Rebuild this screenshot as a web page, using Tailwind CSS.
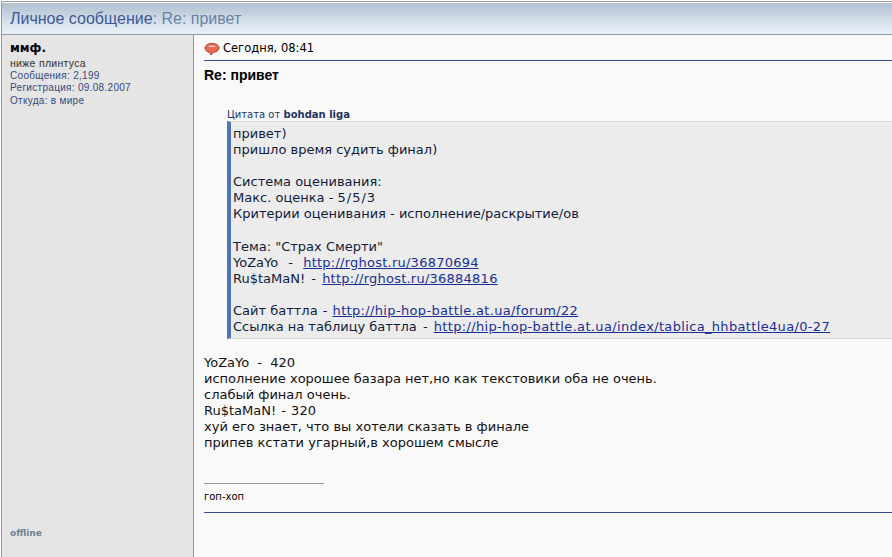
<!DOCTYPE html>
<html lang="ru">
<head>
  <meta charset="UTF-8">
  <title>Личное сообщение: Re: привет</title>
  <script src="https://cdn.jsdelivr.net/npm/@tailwindcss/browser@4"></script>
</head>
<body class="bg-white h-[557px] overflow-hidden font-['DejaVu_Sans',sans-serif] text-black">
  <div class="h-full pt-px pl-px flex flex-col">
    <div class="border-t border-l border-[#999] flex-1 flex flex-col min-h-0">
      <!-- title bar -->
      <div class="h-[32px] shrink-0 mt-px bg-linear-to-b from-[#b0c0cf] via-[#d5e0ea] via-60% to-[#e8f0f8] border-b border-[#999] pl-2 flex items-center text-[16px] font-['Liberation_Sans',sans-serif] text-[#6b82a8]">
        <span class="text-[#3e5896]">Личное сообщение</span><span>: Re: привет</span>
      </div>
      <div class="flex flex-1 min-h-0">
        <!-- sidebar -->
        <div class="w-[192px] shrink-0 bg-[#e5e5e5] border-r border-[#999] pl-2 pt-[5px] flex flex-col font-['Liberation_Sans',sans-serif] text-[10px] tracking-[0.3px] leading-3 text-[#334a80]">
          <div class="font-['DejaVu_Sans',sans-serif] tracking-normal text-[12px] leading-4 font-bold text-black">ммф.</div>
          <div class="text-[10.5px] text-[#333] mt-[1px] mb-px">ниже плинтуса</div>
          <div>Сообщения: 2,199</div>
          <div>Регистрация: 09.08.2007</div>
          <div class="mt-px">Откуда: в мире</div>
          <div class="mt-auto mb-[18px] font-['DejaVu_Sans',sans-serif] tracking-normal text-[9px] font-bold text-[#6f7f92]">offline</div>
        </div>
        <!-- message -->
        <div class="flex-1 bg-[#f9f9f9] pl-[10px] min-w-0">
          <div class="h-[26px] pt-[2px] border-b border-[#3b4a94] flex items-center gap-[3px] text-[11.5px]">
            <svg width="16" height="14" viewBox="0 0 16 14">
              <path d="M8 1.500C4 1.500 1 3.500 1 6s2.600 4.200 5 4.300l1 2.700 2.200-2.800C12.500 10 15 8.400 15 6c0-2.500-3-4.500-7-4.500z" fill="#ea6a55" stroke="#b8392c"/>
              <path d="M4 4.500c1.500-1.200 6-1.200 8 0-2 .8-6 .8-8 0z" fill="#fbd9cf"/>
            </svg>
            <span>Сегодня, 08:41</span>
          </div>
          <div class="mt-[6px] font-['Liberation_Sans',sans-serif] text-[14px] leading-4 font-bold">Re: привет</div>
          <div class="mt-[26px] pl-[23px]">
            <div class="text-[10px] leading-3 text-[#1d3560]">Цитата от <b>bohdan liga</b></div>
            <div class="border-l-4 border-y border-l-[#4f76b4] border-y-[#d9d9d9] bg-[#ececec] pl-[2px] pt-[4px] text-[13px] leading-[16.1px] text-[#111c3a] h-[218px]">
              привет)<br>
              пришло время судить финал)<br><br>
              Система оценивания:<br>
              Макс. оценка - <span class="tracking-[1px]">5/5/3</span><br>
              Критерии оценивания - исполнение/раскрытие/ов<br><br>
              Тема: "Страх Смерти"<br>
              YoZaYo <span class="px-[6px]">-</span> <a class="underline tracking-[0.24px] text-[#1a2f96]">http://rghost.ru/36870694</a><br>
              Ru$taMaN! <span class="px-[2px]">-</span> <a class="underline tracking-[0.24px] text-[#1a2f96]">http://rghost.ru/36884816</a><br><br>
              Сайт баттла <span class="px-px">-</span> <a class="underline tracking-[0.34px] text-[#1a2f96]">http://hip-hop-battle.at.ua/forum/22</a><br>
              Ссылка на таблицу баттла <span class="px-[2px]">-</span> <a class="underline tracking-[0.34px] text-[#1a2f96]">http://hip-hop-battle.at.ua/index/tablica_hhbattle4ua/0-27</a>
            </div>
          </div>
          <div class="mt-[16px] text-[13px] leading-4 text-[#111]">
            YoZaYo <span class="px-[4px]">-</span> 420<br>
            исполнение хорошее базара нет,но как текстовики оба не очень.<br>
            слабый финал очень.<br>
            Ru$taMaN! <span class="px-px">-</span> 320<br>
            хуй его знает, что вы хотели сказать в финале<br>
            припев кстати угарный,в хорошем смысле
          </div>
          <div class="mt-[32px] w-[120px] border-t border-[#999]"></div>
          <div class="mt-[7px] text-[10px] leading-3">гоп-хоп</div>
          <div class="mt-[9px] border-t border-[#3b4a94]"></div>
        </div>
      </div>
    </div>
  </div>
</body>
</html>
